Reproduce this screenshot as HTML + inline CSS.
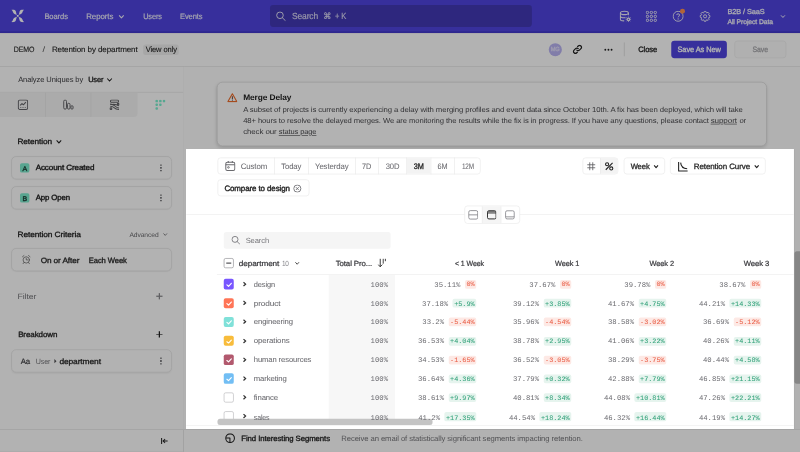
<!DOCTYPE html>
<html><head><meta charset="utf-8"><title>Retention by department</title>
<style>
html,body{margin:0;padding:0;width:800px;height:452px;overflow:hidden;background:#b3b3b3;}
#wrap{position:absolute;left:0;top:0;width:800px;height:452px;overflow:hidden;}
#stage{position:absolute;left:0;top:0;width:1280px;height:723.2px;transform:scale(.625);transform-origin:0 0;overflow:hidden;filter:blur(0.45px);font-family:"Liberation Sans",sans-serif;}
#stage div,#stage svg,#stage span{position:absolute;box-sizing:border-box;}
#stage span{white-space:pre;line-height:1;text-rendering:geometricPrecision;}
#stage span.m{font-family:"Liberation Mono",monospace;}
</style></head>
<body>
<div id="wrap"><div id="stage">
<div style="left:0px;top:0px;width:1280px;height:52.64px;background:#4f44e0;border-bottom:3px solid #4239cc;"></div>
<svg style="left:17.92px;top:14.88px;" width="20.8" height="20.8" viewBox="0 0 24 24"><g fill="#fff"><path d="M0 0.8 C3.2 -0.2 7.2 0.2 8.4 3.4 C9.2 5.8 9.3 8 10.4 10.1 C7 9.8 4.4 8.2 3.3 5.4 C2.6 3.6 2 1.9 0 0.8Z"/><path d="M0 0.8 C3.2 -0.2 7.2 0.2 8.4 3.4 C9.2 5.8 9.3 8 10.4 10.1 C7 9.8 4.4 8.2 3.3 5.4 C2.6 3.6 2 1.9 0 0.8Z" transform="translate(24,0) scale(-1,1)"/><path d="M0 0.8 C3.2 -0.2 7.2 0.2 8.4 3.4 C9.2 5.8 9.3 8 10.4 10.1 C7 9.8 4.4 8.2 3.3 5.4 C2.6 3.6 2 1.9 0 0.8Z" transform="translate(0,24) scale(1,-1)"/><path d="M0 0.8 C3.2 -0.2 7.2 0.2 8.4 3.4 C9.2 5.8 9.3 8 10.4 10.1 C7 9.8 4.4 8.2 3.3 5.4 C2.6 3.6 2 1.9 0 0.8Z" transform="translate(24,24) scale(-1,-1)"/><rect x="10.3" y="10.3" width="3.4" height="3.4" rx=".5"/></g></svg>
<svg style="left:189.31px;top:22.8px;" width="10.56" height="7.2" viewBox="0 0 6.6 4.5"><path d="M1 1 L3.3 3.5 L5.6 1" fill="none" stroke="#f1f0fb" stroke-width="1.05"/></svg>
<div style="left:432px;top:7.84px;width:419.04px;height:34.72px;background:#4239b5;border-radius:5px;"></div>
<svg style="left:441.44px;top:17.92px;" width="16.8" height="15.84" viewBox="0 0 24 24"><circle cx="9.8" cy="9.8" r="8" fill="none" stroke="#e9e8f7" stroke-width="2.3"/><path d="M15.8 15.8 L22.6 22.6" stroke="#e9e8f7" stroke-width="2.3" stroke-linecap="round"/></svg>
<svg style="left:991.04px;top:16px;" width="19.2" height="20.64" viewBox="0 0 24 24"><g fill="none" stroke="#ecebfa" stroke-width="2.1"><ellipse cx="10" cy="5" rx="8" ry="3.4"/><path d="M2 5 V17.4 C2 19.4 5.4 20.8 9.6 20.9 M18 5 V9.4 M2 11.2 C2 13.2 5.6 14.7 10 14.7 C10.8 14.7 11.6 14.6 12.4 14.5"/><circle cx="18.2" cy="17.8" r="2.6" stroke-width="2.6"/><path d="M18.2 12.4V14M18.2 21.6V23.2M12.8 17.8H14.4M22 17.8H23.6M14.4 14 l1.1 1.1M22 21.6 l-1.1-1.1M14.4 21.6 l1.1-1.1M22 14 l-1.1 1.1" stroke-width="1.8"/></g></svg>
<svg style="left:1033.28px;top:16.8px;" width="18.4" height="18.4" viewBox="0 0 24 24"><rect x="1.3" y="1.3" width="5" height="5" rx="2.4" fill="none" stroke="#ecebfa" stroke-width="2"/><rect x="1.3" y="9.5" width="5" height="5" rx="2.4" fill="none" stroke="#ecebfa" stroke-width="2"/><rect x="1.3" y="17.7" width="5" height="5" rx="2.4" fill="none" stroke="#ecebfa" stroke-width="2"/><rect x="9.5" y="1.3" width="5" height="5" rx="2.4" fill="none" stroke="#ecebfa" stroke-width="2"/><rect x="9.5" y="9.5" width="5" height="5" rx="2.4" fill="none" stroke="#ecebfa" stroke-width="2"/><rect x="9.5" y="17.7" width="5" height="5" rx="2.4" fill="none" stroke="#ecebfa" stroke-width="2"/><rect x="17.7" y="1.3" width="5" height="5" rx="2.4" fill="none" stroke="#ecebfa" stroke-width="2"/><rect x="17.7" y="9.5" width="5" height="5" rx="2.4" fill="none" stroke="#ecebfa" stroke-width="2"/><rect x="17.7" y="17.7" width="5" height="5" rx="2.4" fill="none" stroke="#ecebfa" stroke-width="2"/></svg>
<svg style="left:1075.84px;top:16.96px;" width="18.08" height="18.08" viewBox="0 0 24 24"><circle cx="12" cy="12" r="10.6" fill="none" stroke="#ecebfa" stroke-width="2"/><path d="M8.9 9.4 C8.9 5.8 15.1 5.8 15.1 9.4 C15.1 11.8 12 11.7 12 14.3" fill="none" stroke="#ecebfa" stroke-width="2"/><circle cx="12" cy="17.6" r="1.35" fill="#ecebfa"/></svg>
<div style="left:1087.84px;top:14.4px;width:7.68px;height:7.68px;background:#ff9050;border-radius:50%;"></div>
<svg style="left:1119.04px;top:16.64px;" width="18.24" height="18.24" viewBox="0 0 24 24"><g fill="none" stroke="#ecebfa" stroke-width="2" stroke-linejoin="round"><circle cx="12" cy="12" r="3.3"/><path d="M10.34 1.53 L13.66 1.53 L14.41 4.16 L15.84 4.75 L18.23 3.42 L20.58 5.77 L19.25 8.16 L19.84 9.59 L22.47 10.34 L22.47 13.66 L19.84 14.41 L19.25 15.84 L20.58 18.23 L18.23 20.58 L15.84 19.25 L14.41 19.84 L13.66 22.47 L10.34 22.47 L9.59 19.84 L8.16 19.25 L5.77 20.58 L3.42 18.23 L4.75 15.84 L4.16 14.41 L1.53 13.66 L1.53 10.34 L4.16 9.59 L4.75 8.16 L3.42 5.77 L5.77 3.42 L8.16 4.75 L9.59 4.16 Z"/></g></svg>
<svg style="left:1248.08px;top:22.96px;" width="9.44" height="6.56" viewBox="0 0 5.9 4.1"><path d="M1 1 L2.95 3.1 L4.9 1" fill="none" stroke="#f1f0fb" stroke-width="1.0"/></svg>
<div style="left:0px;top:52.64px;width:1280px;height:53.92px;background:#fff;border-bottom:1px solid #e3e3e3;"></div>
<div style="left:229.2px;top:70.88px;width:57.2px;height:16.64px;background:#f0f0f0;border-radius:4px;"></div>
<div style="left:877.6px;top:68.64px;width:21.6px;height:21.6px;background:#b9b3f3;border-radius:50%;"></div>
<svg style="left:916px;top:71.2px;" width="16" height="16" viewBox="0 0 24 24"><g fill="none" stroke="#222" stroke-width="2.9" stroke-linecap="round"><path d="M10.2 13.8 a4.5 4.5 0 0 0 6.4 0 l3.6-3.6 a4.5 4.5 0 0 0-6.4-6.4 l-1.6 1.6"/><path d="M13.8 10.2 a4.5 4.5 0 0 0-6.4 0 l-3.6 3.6 a4.5 4.5 0 0 0 6.4 6.4 l1.6-1.6"/></g></svg>
<div style="left:967.04px;top:77.68px;width:3.04px;height:3.04px;background:#222;border-radius:50%;"></div>
<div style="left:971.81px;top:77.68px;width:3.04px;height:3.04px;background:#222;border-radius:50%;"></div>
<div style="left:976.58px;top:77.68px;width:3.04px;height:3.04px;background:#222;border-radius:50%;"></div>
<div style="left:998.4px;top:68px;width:1.12px;height:22px;background:#e8e8e8;"></div>
<div style="left:1073.6px;top:64.8px;width:89.6px;height:28.4px;background:#4f44e0;border-radius:5px;"></div>
<div style="left:1174.8px;top:64.8px;width:83.2px;height:28.4px;background:#fcfcfc;border:1px solid #ececec;border-radius:5px;"></div>
<div style="left:0px;top:106.56px;width:294.88px;height:616.64px;background:#fff;border-right:1px solid #dedede;"></div>
<svg style="left:170.11px;top:123.92px;" width="10.56" height="7.2" viewBox="0 0 6.6 4.5"><path d="M1 1 L3.3 3.5 L5.6 1" fill="none" stroke="#222" stroke-width="1.05"/></svg>
<div style="left:0px;top:147.36px;width:293.28px;height:0.96px;background:#e3e3e3;"></div>
<div style="left:0px;top:148px;width:219.68px;height:38.56px;background:#f5f5f5;border-bottom-right-radius:6px;"></div>
<div style="left:72.16px;top:148px;width:0.96px;height:38.56px;background:#e6e6e6;"></div>
<div style="left:145.44px;top:148px;width:0.96px;height:38.56px;background:#e6e6e6;"></div>
<svg style="left:27.84px;top:158.56px;" width="17.6" height="17.28" viewBox="0 0 24 24"><g fill="none" stroke="#626266" stroke-width="2.3"><rect x="1.6" y="1.6" width="20.8" height="20.8" rx="3.4"/><path d="M5.6 13.6 L9.8 9.4 L12.8 12 L18.4 6.2" stroke-linejoin="round"/><path d="M7 17.4v2M12 17.4v2M17 17.4v2"/></g></svg>
<svg style="left:100.16px;top:159.2px;" width="18.88" height="16.64" viewBox="0 0 24.4 24"><g fill="none" stroke="#626266" stroke-width="2.2"><rect x="1.4" y="1.4" width="6.4" height="21.2" rx="3.2"/><rect x="10" y="9" width="6" height="13.6" rx="3"/><rect x="18" y="14.6" width="5" height="8" rx="2.5"/></g></svg>
<svg style="left:174.24px;top:158.56px;" width="18.4" height="17.28" viewBox="0 0 24 24"><g fill="none" stroke="#626266" stroke-width="2.3"><rect x="3" y="1.6" width="18" height="5" rx="2.5"/><path d="M2 10.6 C8 10.6 10.5 12 13 14.8 S18.5 19 22 19 M2.5 15.4 C6.5 15.4 9 16.6 11 18.6 S15.5 22.4 22 22.4 M9 10.8 C13 10.6 17 11 22 14.4"/><circle cx="4.2" cy="20.6" r="1.9"/><circle cx="20" cy="10.6" r="1.7"/></g></svg>
<svg style="left:248px;top:159.2px;" width="17.2" height="17.2" viewBox="0 0 24 24"><rect x="1" y="1" width="5.6" height="5.6" rx="2" fill="#7cf0cf"/><rect x="9.2" y="1" width="5.6" height="5.6" rx="2" fill="#7cf0cf"/><rect x="17.4" y="1" width="5.6" height="5.6" rx="2" fill="#7cf0cf"/><rect x="1" y="9.2" width="5.6" height="5.6" rx="2" fill="#7cf0cf"/><rect x="9.2" y="9.2" width="5.6" height="5.6" rx="2" fill="#7cf0cf"/><rect x="1" y="17.4" width="5.6" height="5.6" rx="2" fill="#7cf0cf"/></svg>
<svg style="left:88.51px;top:223.44px;" width="10.56" height="7.2" viewBox="0 0 6.6 4.5"><path d="M1 1 L3.3 3.5 L5.6 1" fill="none" stroke="#222" stroke-width="1.05"/></svg>
<div style="left:18px;top:250px;width:257.04px;height:36.8px;background:#fff;border:1px solid #e0e0e0;border-radius:8px;box-shadow:0 1px 2px rgba(0,0,0,.04);"></div>
<div style="left:32px;top:260.88px;width:14.88px;height:15.04px;background:#7eeccf;border-radius:3px;"></div>
<div style="left:256.24px;top:262.72px;width:2.4px;height:2.4px;background:#6a6a6e;border-radius:50%;"></div>
<div style="left:256.24px;top:267.2px;width:2.4px;height:2.4px;background:#6a6a6e;border-radius:50%;"></div>
<div style="left:256.24px;top:271.68px;width:2.4px;height:2.4px;background:#6a6a6e;border-radius:50%;"></div>
<div style="left:18px;top:298px;width:257.04px;height:36.8px;background:#fff;border:1px solid #e0e0e0;border-radius:8px;box-shadow:0 1px 2px rgba(0,0,0,.04);"></div>
<div style="left:32px;top:308.88px;width:14.88px;height:15.04px;background:#7eeccf;border-radius:3px;"></div>
<div style="left:256.24px;top:310.72px;width:2.4px;height:2.4px;background:#6a6a6e;border-radius:50%;"></div>
<div style="left:256.24px;top:315.2px;width:2.4px;height:2.4px;background:#6a6a6e;border-radius:50%;"></div>
<div style="left:256.24px;top:319.68px;width:2.4px;height:2.4px;background:#6a6a6e;border-radius:50%;"></div>
<svg style="left:259.79px;top:372.16px;" width="8.8" height="6.24" viewBox="0 0 5.5 3.9"><path d="M1 1 L2.75 2.9 L4.5 1" fill="none" stroke="#77777b" stroke-width="0.9"/></svg>
<div style="left:18px;top:397.2px;width:257.04px;height:36.8px;background:#fff;border:1px solid #e0e0e0;border-radius:8px;box-shadow:0 1px 2px rgba(0,0,0,.04);"></div>
<svg style="left:34px;top:406.8px;" width="16" height="16.4" viewBox="0 0 24 24"><g fill="none" stroke="#555" stroke-width="1.6" stroke-linecap="round"><circle cx="12" cy="13" r="7.6"/><path d="M12 8.8V13H15.4M3 5.4 L6.6 2.4M21 5.4 L17.4 2.4M6.4 19.4 L4.4 22M17.6 19.4 L19.6 22"/></g></svg>
<div style="left:249.76px;top:473.2px;width:10.24px;height:1.44px;background:#8a8a8e;"></div>
<div style="left:254.16px;top:468.8px;width:1.44px;height:10.24px;background:#8a8a8e;"></div>
<div style="left:249.76px;top:534.64px;width:10.24px;height:1.44px;background:#222;"></div>
<div style="left:254.16px;top:530.24px;width:1.44px;height:10.24px;background:#222;"></div>
<div style="left:18px;top:558.8px;width:257.04px;height:37.68px;background:#fff;border:1px solid #e0e0e0;border-radius:8px;box-shadow:0 1px 2px rgba(0,0,0,.04);"></div>
<svg style="left:85.92px;top:573.92px;" width="5.12" height="7.68" viewBox="0 0 6 10"><path d="M1 0.6 L5.4 5 L1 9.4Z" fill="#505054"/></svg>
<div style="left:256.24px;top:571.92px;width:2.4px;height:2.4px;background:#6a6a6e;border-radius:50%;"></div>
<div style="left:256.24px;top:576.4px;width:2.4px;height:2.4px;background:#6a6a6e;border-radius:50%;"></div>
<div style="left:256.24px;top:580.88px;width:2.4px;height:2.4px;background:#6a6a6e;border-radius:50%;"></div>
<div style="left:0px;top:686.56px;width:293.28px;height:0.96px;background:#e3e3e3;"></div>
<svg style="left:257.28px;top:699.68px;" width="12.8" height="11.2" viewBox="0 0 17 16"><g fill="none" stroke="#222" stroke-width="2.3"><path d="M1.6 1V15M15.4 8H5.4M9.6 3.4 L5 8 L9.6 12.6"/></g></svg>
<div style="left:294.24px;top:106.56px;width:985.76px;height:616.64px;background:#fefefe;"></div>
<div style="left:346.56px;top:130.88px;width:880.32px;height:103.36px;background:#fff;border:1px solid #d6d6d6;border-radius:9px;box-shadow:0 2px 5px rgba(0,0,0,.13);"></div>
<svg style="left:362.72px;top:147.52px;" width="17.6" height="16.64" viewBox="0 0 24 24"><g fill="none" stroke-linejoin="round" stroke-linecap="round"><path d="M12 3 L22.2 21 H1.8Z" stroke="#ee6c2a" stroke-width="2.6"/><path d="M12 9.6V14.4" stroke="#5e4338" stroke-width="2.3"/></g><circle cx="12" cy="17.6" r="1.3" fill="#5e4338"/></svg>
<div style="left:298.24px;top:238.72px;width:971.84px;height:448.32px;background:#fff;"></div>
<div style="left:348px;top:251.84px;width:421.44px;height:27.2px;border:1px solid #e8e8e8;border-radius:5px;background:#fff;"></div>
<div style="left:438.72px;top:251.84px;width:0.96px;height:27.2px;background:#e8e8e8;"></div>
<div style="left:493.12px;top:251.84px;width:0.96px;height:27.2px;background:#e8e8e8;"></div>
<div style="left:568.32px;top:251.84px;width:0.96px;height:27.2px;background:#e8e8e8;"></div>
<div style="left:605.28px;top:251.84px;width:0.96px;height:27.2px;background:#e8e8e8;"></div>
<div style="left:650.24px;top:251.84px;width:0.96px;height:27.2px;background:#e8e8e8;"></div>
<div style="left:688.64px;top:251.84px;width:0.96px;height:27.2px;background:#e8e8e8;"></div>
<div style="left:726.88px;top:251.84px;width:0.96px;height:27.2px;background:#e8e8e8;"></div>
<div style="left:651.2px;top:252.8px;width:37.44px;height:25.28px;background:#f3f3f3;"></div>
<svg style="left:359.68px;top:256.96px;" width="16.96" height="16.96" viewBox="0 0 24 24"><g fill="none" stroke="#6a6a6e" stroke-width="2.3"><rect x="1.8" y="3.6" width="20.4" height="18.6" rx="3.4"/><path d="M1.8 9.6H22.2M7.4 1V5M16.6 1V5"/><rect x="6" y="13.8" width="3.6" height="3.2" rx="1" stroke-width="2"/></g></svg>
<div style="left:348px;top:286.72px;width:147.2px;height:27.68px;border:1px solid #e8e8e8;border-radius:5px;background:#fff;"></div>
<svg style="left:469.28px;top:294.72px;" width="13.44" height="13.44" viewBox="0 0 24 24"><g fill="none" stroke="#6a6a6e" stroke-width="2.5"><circle cx="12" cy="12" r="10.2"/><path d="M8 8L16 16M16 8L8 16"/></g></svg>
<div style="left:931.84px;top:251.84px;width:57.44px;height:27.2px;border:1px solid #e8e8e8;border-radius:5px;background:#fff;overflow:hidden;"></div>
<div style="left:960.48px;top:252.8px;width:27.84px;height:25.28px;background:#f3f3f3;border-left:1px solid #e8e8e8;"></div>
<svg style="left:937.6px;top:257.6px;" width="16" height="16" viewBox="0 0 24 24"><g fill="none" stroke="#5e5e62" stroke-width="2"><path d="M8.4 2.5V21.5M15.6 2.5V21.5M2.5 8.4H21.5M2.5 15.6H21.5"/></g></svg>
<svg style="left:967.36px;top:257.6px;" width="15.36" height="16.32" viewBox="0 0 24 24"><g fill="none" stroke="#222" stroke-width="2.7"><circle cx="6.8" cy="6.8" r="3.9"/><circle cx="17.2" cy="17.2" r="3.9"/><path d="M20.5 3.5L3.5 20.5"/></g></svg>
<div style="left:997.76px;top:251.84px;width:66.56px;height:27.2px;border:1px solid #e8e8e8;border-radius:5px;background:#fff;"></div>
<svg style="left:1044.69px;top:263.04px;" width="9.44" height="6.72" viewBox="0 0 5.9 4.2"><path d="M1 1 L2.95 3.2 L4.9 1" fill="none" stroke="#222" stroke-width="1.15"/></svg>
<div style="left:1072px;top:251.84px;width:153.44px;height:27.2px;border:1px solid #e8e8e8;border-radius:5px;background:#fff;"></div>
<svg style="left:1083.52px;top:257.92px;" width="17.28" height="17.28" viewBox="0 0 24 24"><g fill="none" stroke="#222" stroke-width="2.4" stroke-linejoin="round"><path d="M2.5 1.5V21.5H22.5"/><path d="M7 3 C7.6 11 11.5 16 21.5 16.6"/></g></svg>
<svg style="left:1205.87px;top:263.04px;" width="9.44" height="6.72" viewBox="0 0 5.9 4.2"><path d="M1 1 L2.95 3.2 L4.9 1" fill="none" stroke="#222" stroke-width="1.15"/></svg>
<div style="left:298.24px;top:342.72px;width:971.84px;height:1.12px;background:#ececec;"></div>
<div style="left:742.72px;top:329.44px;width:89.12px;height:28.48px;border:1px solid #e8e8e8;border-radius:5px;background:#fff;"></div>
<div style="left:771.2px;top:330.4px;width:30.4px;height:26.56px;background:#f5f5f5;border-left:1px solid #ececec;border-right:1px solid #ececec;"></div>
<svg style="left:748.96px;top:336.16px;" width="16.32" height="15.52" viewBox="0 0 20 19"><g fill="none" stroke="#85858a" stroke-width="1.7"><rect x="1.2" y="1.2" width="17.6" height="16.6" rx="3"/><path d="M1.2 9.5H18.8"/></g></svg>
<svg style="left:778.72px;top:336.16px;" width="15.68" height="15.52" viewBox="0 0 20 19"><g fill="none" stroke="#2a2a2a" stroke-width="2.0"><rect x="1.2" y="1.2" width="17.6" height="16.6" rx="3"/><path d="M1.2 5.6H18.8"/><path d="M3 2.4H17" stroke-width="1.2"/></g></svg>
<svg style="left:808px;top:336.16px;" width="15.68" height="15.52" viewBox="0 0 20 19"><g fill="none" stroke="#85858a" stroke-width="1.7"><rect x="1.2" y="1.2" width="17.6" height="16.6" rx="3"/><path d="M1.2 13.6H18.8"/></g></svg>
<div style="left:358.4px;top:371.2px;width:266.4px;height:27.2px;background:#f5f5f5;border-radius:4px;"></div>
<svg style="left:369.6px;top:377.44px;" width="14.72" height="14.72" viewBox="0 0 24 24"><circle cx="9.8" cy="9.8" r="7.8" fill="none" stroke="#6b6b70" stroke-width="2.1"/><path d="M15.6 15.6 L22.4 22.4" stroke="#6b6b70" stroke-width="2.1" stroke-linecap="round"/></svg>
<div style="left:347.2px;top:438.72px;width:922.88px;height:0.96px;background:#ececec;"></div>
<div style="left:358.4px;top:412.96px;width:15.68px;height:15.68px;border:1.5px solid #8a8a8e;border-radius:3px;background:#fff;"></div>
<div style="left:362.24px;top:420px;width:8px;height:1.6px;background:#5a5a5e;"></div>
<svg style="left:471.2px;top:418.4px;" width="8.96" height="6.4" viewBox="0 0 5.6 4.0"><path d="M1 1 L2.8 3.0 L4.6 1" fill="none" stroke="#444" stroke-width="0.95"/></svg>
<svg style="left:604.16px;top:413.44px;" width="17.28" height="15.68" viewBox="0 0 26 23.6"><g fill="none" stroke="#333" stroke-width="2.3"><path d="M6.6 1.5V21M1.6 15.6 L6.6 20.8 L11.6 15.6"/><path d="M13.8 1.5V13.4M19 1.5V7.4" stroke-width="2.2"/></g></svg>
<div style="left:526.4px;top:439.68px;width:105.6px;height:241.92px;background:#f7f7f7;"></div>
<div style="left:358.4px;top:446.4px;width:16px;height:16.32px;background:#7856ff;border-radius:3px;"></div>
<svg style="left:360.8px;top:450.88px;" width="11.2" height="8.96" viewBox="0 0 7 5.6"><path d="M1.3 3 L2.9 4.4 L5.7 1.4" fill="none" stroke="#fff" stroke-width="1.15" stroke-linecap="round" stroke-linejoin="round"/></svg>
<svg style="left:387.84px;top:449.92px;" width="7.04" height="9.28" viewBox="0 0 4.4 5.8"><path d="M1 1 L3.1 2.9 L1 4.8" fill="none" stroke="#333" stroke-width="1.25"/></svg>
<div style="left:743.88px;top:448px;width:17.88px;height:14.08px;background:#fde9e5;border-radius:3px;"></div>
<div style="left:895.88px;top:448px;width:17.88px;height:14.08px;background:#fde9e5;border-radius:3px;"></div>
<div style="left:1047.88px;top:448px;width:17.88px;height:14.08px;background:#fde9e5;border-radius:3px;"></div>
<div style="left:1199.88px;top:448px;width:17.88px;height:14.08px;background:#fde9e5;border-radius:3px;"></div>
<div style="left:358.4px;top:476.61px;width:16px;height:16.32px;background:#ff7557;border-radius:3px;"></div>
<svg style="left:360.8px;top:481.09px;" width="11.2" height="8.96" viewBox="0 0 7 5.6"><path d="M1.3 3 L2.9 4.4 L5.7 1.4" fill="none" stroke="#fff" stroke-width="1.15" stroke-linecap="round" stroke-linejoin="round"/></svg>
<svg style="left:387.84px;top:480.13px;" width="7.04" height="9.28" viewBox="0 0 4.4 5.8"><path d="M1 1 L3.1 2.9 L1 4.8" fill="none" stroke="#333" stroke-width="1.25"/></svg>
<div style="left:724.26px;top:478.21px;width:37.5px;height:14.08px;background:#e6f4ee;border-radius:3px;"></div>
<div style="left:869.72px;top:478.21px;width:44.04px;height:14.08px;background:#e6f4ee;border-radius:3px;"></div>
<div style="left:1021.72px;top:478.21px;width:44.04px;height:14.08px;background:#e6f4ee;border-radius:3px;"></div>
<div style="left:1167.18px;top:478.21px;width:50.58px;height:14.08px;background:#e6f4ee;border-radius:3px;"></div>
<div style="left:358.4px;top:506.82px;width:16px;height:16.32px;background:#80e1d9;border-radius:3px;"></div>
<svg style="left:360.8px;top:511.3px;" width="11.2" height="8.96" viewBox="0 0 7 5.6"><path d="M1.3 3 L2.9 4.4 L5.7 1.4" fill="none" stroke="#fff" stroke-width="1.15" stroke-linecap="round" stroke-linejoin="round"/></svg>
<svg style="left:387.84px;top:510.34px;" width="7.04" height="9.28" viewBox="0 0 4.4 5.8"><path d="M1 1 L3.1 2.9 L1 4.8" fill="none" stroke="#333" stroke-width="1.25"/></svg>
<div style="left:717.72px;top:508.42px;width:44.04px;height:14.08px;background:#fde9e5;border-radius:3px;"></div>
<div style="left:869.72px;top:508.42px;width:44.04px;height:14.08px;background:#fde9e5;border-radius:3px;"></div>
<div style="left:1021.72px;top:508.42px;width:44.04px;height:14.08px;background:#fde9e5;border-radius:3px;"></div>
<div style="left:1173.72px;top:508.42px;width:44.04px;height:14.08px;background:#fde9e5;border-radius:3px;"></div>
<div style="left:358.4px;top:537.02px;width:16px;height:16.32px;background:#f8bc3b;border-radius:3px;"></div>
<svg style="left:360.8px;top:541.5px;" width="11.2" height="8.96" viewBox="0 0 7 5.6"><path d="M1.3 3 L2.9 4.4 L5.7 1.4" fill="none" stroke="#fff" stroke-width="1.15" stroke-linecap="round" stroke-linejoin="round"/></svg>
<svg style="left:387.84px;top:540.54px;" width="7.04" height="9.28" viewBox="0 0 4.4 5.8"><path d="M1 1 L3.1 2.9 L1 4.8" fill="none" stroke="#333" stroke-width="1.25"/></svg>
<div style="left:717.72px;top:538.62px;width:44.04px;height:14.08px;background:#e6f4ee;border-radius:3px;"></div>
<div style="left:869.72px;top:538.62px;width:44.04px;height:14.08px;background:#e6f4ee;border-radius:3px;"></div>
<div style="left:1021.72px;top:538.62px;width:44.04px;height:14.08px;background:#e6f4ee;border-radius:3px;"></div>
<div style="left:1173.72px;top:538.62px;width:44.04px;height:14.08px;background:#e6f4ee;border-radius:3px;"></div>
<div style="left:358.4px;top:567.23px;width:16px;height:16.32px;background:#b2596e;border-radius:3px;"></div>
<svg style="left:360.8px;top:571.71px;" width="11.2" height="8.96" viewBox="0 0 7 5.6"><path d="M1.3 3 L2.9 4.4 L5.7 1.4" fill="none" stroke="#fff" stroke-width="1.15" stroke-linecap="round" stroke-linejoin="round"/></svg>
<svg style="left:387.84px;top:570.75px;" width="7.04" height="9.28" viewBox="0 0 4.4 5.8"><path d="M1 1 L3.1 2.9 L1 4.8" fill="none" stroke="#333" stroke-width="1.25"/></svg>
<div style="left:717.72px;top:568.83px;width:44.04px;height:14.08px;background:#fde9e5;border-radius:3px;"></div>
<div style="left:869.72px;top:568.83px;width:44.04px;height:14.08px;background:#fde9e5;border-radius:3px;"></div>
<div style="left:1021.72px;top:568.83px;width:44.04px;height:14.08px;background:#fde9e5;border-radius:3px;"></div>
<div style="left:1173.72px;top:568.83px;width:44.04px;height:14.08px;background:#e6f4ee;border-radius:3px;"></div>
<div style="left:358.4px;top:597.44px;width:16px;height:16.32px;background:#72bef4;border-radius:3px;"></div>
<svg style="left:360.8px;top:601.92px;" width="11.2" height="8.96" viewBox="0 0 7 5.6"><path d="M1.3 3 L2.9 4.4 L5.7 1.4" fill="none" stroke="#fff" stroke-width="1.15" stroke-linecap="round" stroke-linejoin="round"/></svg>
<svg style="left:387.84px;top:600.96px;" width="7.04" height="9.28" viewBox="0 0 4.4 5.8"><path d="M1 1 L3.1 2.9 L1 4.8" fill="none" stroke="#333" stroke-width="1.25"/></svg>
<div style="left:717.72px;top:599.04px;width:44.04px;height:14.08px;background:#e6f4ee;border-radius:3px;"></div>
<div style="left:869.72px;top:599.04px;width:44.04px;height:14.08px;background:#e6f4ee;border-radius:3px;"></div>
<div style="left:1021.72px;top:599.04px;width:44.04px;height:14.08px;background:#e6f4ee;border-radius:3px;"></div>
<div style="left:1167.18px;top:599.04px;width:50.58px;height:14.08px;background:#e6f4ee;border-radius:3px;"></div>
<div style="left:358.4px;top:627.65px;width:16px;height:16.32px;border:1.5px solid #b5b5b9;border-radius:3px;background:#fff;"></div>
<svg style="left:387.84px;top:631.17px;" width="7.04" height="9.28" viewBox="0 0 4.4 5.8"><path d="M1 1 L3.1 2.9 L1 4.8" fill="none" stroke="#333" stroke-width="1.25"/></svg>
<div style="left:717.72px;top:629.25px;width:44.04px;height:14.08px;background:#e6f4ee;border-radius:3px;"></div>
<div style="left:869.72px;top:629.25px;width:44.04px;height:14.08px;background:#e6f4ee;border-radius:3px;"></div>
<div style="left:1015.18px;top:629.25px;width:50.58px;height:14.08px;background:#e6f4ee;border-radius:3px;"></div>
<div style="left:1167.18px;top:629.25px;width:50.58px;height:14.08px;background:#e6f4ee;border-radius:3px;"></div>
<div style="left:358.4px;top:657.86px;width:16px;height:16.32px;border:1.5px solid #b5b5b9;border-radius:3px;background:#fff;"></div>
<svg style="left:387.84px;top:661.38px;" width="7.04" height="9.28" viewBox="0 0 4.4 5.8"><path d="M1 1 L3.1 2.9 L1 4.8" fill="none" stroke="#333" stroke-width="1.25"/></svg>
<div style="left:711.18px;top:659.46px;width:50.58px;height:14.08px;background:#e6f4ee;border-radius:3px;"></div>
<div style="left:863.18px;top:659.46px;width:50.58px;height:14.08px;background:#e6f4ee;border-radius:3px;"></div>
<div style="left:1015.18px;top:659.46px;width:50.58px;height:14.08px;background:#e6f4ee;border-radius:3px;"></div>
<div style="left:1167.18px;top:659.46px;width:50.58px;height:14.08px;background:#e6f4ee;border-radius:3px;"></div>
<div style="left:298.24px;top:680.32px;width:971.84px;height:6.72px;background:#fff;border-top:1px solid #ededed;"></div>
<div style="left:347.84px;top:670.4px;width:344.32px;height:9.6px;background:#c4c4c4;border-radius:4px;"></div>
<div style="left:294.24px;top:687.04px;width:985.76px;height:36.16px;background:#fff;border-top:1px solid #e3e3e3;"></div>
<div style="left:293.28px;top:687.04px;width:0.96px;height:36.16px;background:#dedede;"></div>
<svg style="left:359.84px;top:693.44px;" width="16.32" height="16.32" viewBox="0 0 24 24"><g fill="none" stroke="#222" stroke-width="2.5"><circle cx="12" cy="12" r="10.2"/><path d="M2.4 11.4 H11.6 V21.6" stroke-linejoin="round"/></g></svg>
<div style="left:1270.08px;top:238.72px;width:0.96px;height:448.32px;background:#ededed;"></div>
<div style="left:1271.36px;top:401.6px;width:11.84px;height:212.8px;background:#c1c1c1;border-radius:4px;"></div>
<span style="left:71.2px;top:17.08px;font-size:12.75px;line-height:17.00px;font-weight:400;-webkit-text-stroke:0.20px #f1f0fb;color:#f1f0fb;letter-spacing:-0.153px;transform:scaleX(0.9523);transform-origin:left center;">Boards</span>
<span style="left:138px;top:17.08px;font-size:12.75px;line-height:17.00px;font-weight:400;-webkit-text-stroke:0.20px #f1f0fb;color:#f1f0fb;letter-spacing:-0.153px;transform:scaleX(0.9913);transform-origin:left center;">Reports</span>
<span style="left:229.2px;top:17.08px;font-size:12.75px;line-height:17.00px;font-weight:400;-webkit-text-stroke:0.20px #f1f0fb;color:#f1f0fb;letter-spacing:-0.153px;transform:scaleX(0.9222);transform-origin:left center;">Users</span>
<span style="left:288px;top:17.08px;font-size:12.75px;line-height:17.00px;font-weight:400;-webkit-text-stroke:0.20px #f1f0fb;color:#f1f0fb;letter-spacing:-0.153px;transform:scaleX(0.9458);transform-origin:left center;">Events</span>
<span style="left:466.8px;top:17.18px;font-size:14.25px;line-height:19.00px;font-weight:400;-webkit-text-stroke:0.25px #dcdaf3;color:#dcdaf3;letter-spacing:-0.171px;transform:scaleX(0.9518);transform-origin:left center;">Search</span>
<span style="left:517.2px;top:16.08px;font-size:14px;line-height:18.00px;font-weight:400;-webkit-text-stroke:0.30px #dcdaf3;color:#dcdaf3;letter-spacing:-0.168px;transform:scaleX(0.9246);transform-origin:left center;">⌘</span>
<span style="left:536px;top:17.18px;font-size:14.25px;line-height:19.00px;font-weight:400;-webkit-text-stroke:0.25px #dcdaf3;color:#dcdaf3;letter-spacing:-0.171px;transform:scaleX(0.8458);transform-origin:left center;">+ K</span>
<span style="left:1164px;top:12.18px;font-size:11.5px;line-height:15.00px;font-weight:400;-webkit-text-stroke:0.50px #f1f0fb;color:#f1f0fb;letter-spacing:-0.138px;transform:scaleX(1.0193);transform-origin:left center;">B2B / SaaS</span>
<span style="left:1164px;top:27.56px;font-size:10.5px;line-height:14.00px;font-weight:400;-webkit-text-stroke:0.50px #f1f0fb;color:#f1f0fb;letter-spacing:-0.126px;transform:scaleX(1.0347);transform-origin:left center;">All Project Data</span>
<span style="left:21.6px;top:71.20px;font-size:12.5px;line-height:16.00px;font-weight:400;-webkit-text-stroke:0.17px #1f1f1f;color:#1f1f1f;letter-spacing:-0.150px;transform:scaleX(0.8996);transform-origin:left center;">DEMO</span>
<span style="left:68px;top:71.20px;font-size:12.5px;line-height:16.00px;font-weight:400;color:#555;letter-spacing:-0.150px;transform:scaleX(1.2019);transform-origin:left center;">/</span>
<span style="left:83.2px;top:71.20px;font-size:12.5px;line-height:16.00px;font-weight:400;-webkit-text-stroke:0.17px #1f1f1f;color:#1f1f1f;letter-spacing:-0.150px;transform:scaleX(1.0281);transform-origin:left center;">Retention by department</span>
<span style="left:233.2px;top:71.20px;font-size:12.5px;line-height:16.00px;font-weight:400;-webkit-text-stroke:0.17px #1f1f1f;color:#1f1f1f;letter-spacing:-0.150px;transform:scaleX(0.9630);transform-origin:left center;">View only</span>
<span style="left:881.28px;top:74.02px;font-size:9.5px;line-height:12.00px;font-weight:400;-webkit-text-stroke:0.50px #e4e1fa;color:#e4e1fa;letter-spacing:-0.114px;transform:scaleX(0.9550);transform-origin:left center;">MG</span>
<span style="left:1020.8px;top:71.20px;font-size:12.5px;line-height:16.00px;font-weight:400;-webkit-text-stroke:0.50px #1f1f1f;color:#1f1f1f;letter-spacing:-0.150px;transform:scaleX(0.9738);transform-origin:left center;">Close</span>
<span style="left:1084px;top:71.20px;font-size:12.5px;line-height:16.00px;font-weight:400;-webkit-text-stroke:0.50px #fff;color:#fff;letter-spacing:-0.150px;transform:scaleX(0.9518);transform-origin:left center;">Save As New</span>
<span style="left:1204px;top:71.20px;font-size:12.5px;line-height:16.00px;font-weight:400;-webkit-text-stroke:0.50px #a9a9ad;color:#a9a9ad;letter-spacing:-0.150px;transform:scaleX(0.8887);transform-origin:left center;">Save</span>
<span style="left:29.2px;top:119.20px;font-size:12px;line-height:16.00px;font-weight:400;color:#3c3c40;letter-spacing:-0.144px;transform:scaleX(1.0051);transform-origin:left center;">Analyze Uniques by</span>
<span style="left:140.8px;top:119.20px;font-size:12px;line-height:16.00px;font-weight:400;-webkit-text-stroke:0.50px #1f1f1f;color:#1f1f1f;letter-spacing:-0.144px;transform:scaleX(0.9852);transform-origin:left center;">User</span>
<span style="left:28px;top:218.40px;font-size:12.25px;line-height:16.00px;font-weight:400;-webkit-text-stroke:0.50px #1f1f1f;color:#1f1f1f;letter-spacing:-0.147px;transform:scaleX(1.0797);transform-origin:left center;">Retention</span>
<span style="left:36.16px;top:262.52px;font-size:10.5px;line-height:14.00px;font-weight:400;-webkit-text-stroke:0.55px #1f3d36;color:#1f3d36;letter-spacing:-0.126px;transform:scaleX(1.0681);transform-origin:left center;">A</span>
<span style="left:56.96px;top:260.40px;font-size:12.25px;line-height:16.00px;font-weight:400;-webkit-text-stroke:0.60px #222;color:#222;letter-spacing:-0.147px;transform:scaleX(1.0538);transform-origin:left center;">Account Created</span>
<span style="left:36.16px;top:310.52px;font-size:10.5px;line-height:14.00px;font-weight:400;-webkit-text-stroke:0.55px #1f3d36;color:#1f3d36;letter-spacing:-0.126px;transform:scaleX(1.0681);transform-origin:left center;">B</span>
<span style="left:56.96px;top:308.40px;font-size:12.25px;line-height:16.00px;font-weight:400;-webkit-text-stroke:0.60px #222;color:#222;letter-spacing:-0.147px;transform:scaleX(1.0193);transform-origin:left center;">App Open</span>
<span style="left:28px;top:366.80px;font-size:12.25px;line-height:16.00px;font-weight:400;-webkit-text-stroke:0.50px #1f1f1f;color:#1f1f1f;letter-spacing:-0.147px;transform:scaleX(1.0918);transform-origin:left center;">Retention Criteria</span>
<span style="left:207.2px;top:368.60px;font-size:10.5px;line-height:14.00px;font-weight:400;color:#6a6a6e;letter-spacing:-0.126px;transform:scaleX(1.0240);transform-origin:left center;">Advanced</span>
<span style="left:64.8px;top:408.00px;font-size:12.25px;line-height:16.00px;font-weight:400;-webkit-text-stroke:0.50px #2a2a2a;color:#2a2a2a;letter-spacing:-0.147px;transform:scaleX(1.0759);transform-origin:left center;">On or After</span>
<span style="left:142px;top:408.00px;font-size:12.25px;line-height:16.00px;font-weight:400;-webkit-text-stroke:0.50px #2a2a2a;color:#2a2a2a;letter-spacing:-0.147px;transform:scaleX(0.9952);transform-origin:left center;">Each Week</span>
<span style="left:28px;top:466.00px;font-size:12.25px;line-height:16.00px;font-weight:400;color:#77777b;letter-spacing:-0.147px;transform:scaleX(1.1388);transform-origin:left center;">Filter</span>
<span style="left:28.64px;top:526.88px;font-size:12.25px;line-height:16.00px;font-weight:400;-webkit-text-stroke:0.50px #1f1f1f;color:#1f1f1f;letter-spacing:-0.147px;transform:scaleX(1.0459);transform-origin:left center;">Breakdown</span>
<span style="left:32.64px;top:569.60px;font-size:12.5px;line-height:16.00px;font-weight:400;-webkit-text-stroke:0.25px #3a3a3e;color:#3a3a3e;letter-spacing:-0.150px;transform:scaleX(1.0027);transform-origin:left center;">Aa</span>
<span style="left:56.8px;top:569.60px;font-size:12.25px;line-height:16.00px;font-weight:400;color:#77777b;letter-spacing:-0.147px;transform:scaleX(0.9303);transform-origin:left center;">User</span>
<span style="left:94.88px;top:569.60px;font-size:12.25px;line-height:16.00px;font-weight:400;-webkit-text-stroke:0.50px #2a2a2a;color:#2a2a2a;letter-spacing:-0.147px;transform:scaleX(1.0975);transform-origin:left center;">department</span>
<span style="left:388.96px;top:146.84px;font-size:13px;line-height:17.00px;font-weight:700;color:#1f1f1f;letter-spacing:-0.156px;transform:scaleX(1.0289);transform-origin:left center;">Merge Delay</span>
<span style="left:388.8px;top:168.82px;font-size:11.5px;line-height:15.00px;font-weight:400;color:#4a4a4e;letter-spacing:-0.138px;transform:scaleX(1.0767);transform-origin:left center;">A subset of projects is currently experiencing a delay with merging profiles and event data since October 10th. A fix has been deployed, which will take</span>
<span style="left:388.8px;top:186.74px;font-size:11.5px;line-height:15.00px;font-weight:400;color:#4a4a4e;letter-spacing:-0.138px;transform:scaleX(1.0679);transform-origin:left center;">48+ hours to resolve the delayed merges. We are monitoring the results while the fix is in progress. If you have any questions, please contact </span>
<span style="left:1137.2px;top:186.74px;font-size:11.5px;line-height:15.00px;font-weight:400;color:#4a4a4e;letter-spacing:-0.138px;transform:scaleX(1.1228);transform-origin:left center;text-decoration:underline;">support</span>
<span style="left:1183.36px;top:186.74px;font-size:11.5px;line-height:15.00px;font-weight:400;color:#4a4a4e;letter-spacing:-0.138px;transform:scaleX(1.0690);transform-origin:left center;">or</span>
<span style="left:388.8px;top:204.98px;font-size:11.5px;line-height:15.00px;font-weight:400;color:#4a4a4e;letter-spacing:-0.138px;transform:scaleX(1.1020);transform-origin:left center;">check our </span>
<span style="left:445.76px;top:204.98px;font-size:11.5px;line-height:15.00px;font-weight:400;color:#4a4a4e;letter-spacing:-0.138px;transform:scaleX(1.0395);transform-origin:left center;text-decoration:underline;">status page</span>
<span style="left:385.2px;top:256.60px;font-size:12.75px;line-height:17.00px;font-weight:400;-webkit-text-stroke:0.10px #6b6b70;color:#6b6b70;letter-spacing:-0.153px;transform:scaleX(0.9857);transform-origin:left center;">Custom</span>
<span style="left:450.4px;top:256.60px;font-size:12.75px;line-height:17.00px;font-weight:400;-webkit-text-stroke:0.10px #6b6b70;color:#6b6b70;letter-spacing:-0.153px;transform:scaleX(0.9620);transform-origin:left center;">Today</span>
<span style="left:504.4px;top:256.60px;font-size:12.75px;line-height:17.00px;font-weight:400;-webkit-text-stroke:0.10px #6b6b70;color:#6b6b70;letter-spacing:-0.153px;transform:scaleX(0.9770);transform-origin:left center;">Yesterday</span>
<span style="left:579.2px;top:256.60px;font-size:12.75px;line-height:17.00px;font-weight:400;-webkit-text-stroke:0.10px #6b6b70;color:#6b6b70;letter-spacing:-0.153px;transform:scaleX(0.9250);transform-origin:left center;">7D</span>
<span style="left:616.8px;top:256.60px;font-size:12.75px;line-height:17.00px;font-weight:400;-webkit-text-stroke:0.10px #6b6b70;color:#6b6b70;letter-spacing:-0.153px;transform:scaleX(0.9591);transform-origin:left center;">30D</span>
<span style="left:662px;top:256.60px;font-size:12.75px;line-height:17.00px;font-weight:400;-webkit-text-stroke:0.50px #222;color:#222;letter-spacing:-0.153px;transform:scaleX(0.9192);transform-origin:left center;">3M</span>
<span style="left:700px;top:256.60px;font-size:12.75px;line-height:17.00px;font-weight:400;-webkit-text-stroke:0.10px #6b6b70;color:#6b6b70;letter-spacing:-0.153px;transform:scaleX(0.9192);transform-origin:left center;">6M</span>
<span style="left:739.2px;top:256.60px;font-size:12.75px;line-height:17.00px;font-weight:400;-webkit-text-stroke:0.10px #6b6b70;color:#6b6b70;letter-spacing:-0.153px;transform:scaleX(0.8051);transform-origin:left center;">12M</span>
<span style="left:359.2px;top:292.80px;font-size:12.5px;line-height:16.00px;font-weight:400;-webkit-text-stroke:0.60px #262626;color:#262626;letter-spacing:-0.150px;transform:scaleX(1.0167);transform-origin:left center;">Compare to design</span>
<span style="left:1008.8px;top:257.60px;font-size:12.5px;line-height:16.00px;font-weight:400;-webkit-text-stroke:0.50px #2c2c2c;color:#2c2c2c;letter-spacing:-0.150px;transform:scaleX(0.9762);transform-origin:left center;">Week</span>
<span style="left:1110px;top:257.60px;font-size:12.5px;line-height:16.00px;font-weight:400;-webkit-text-stroke:0.50px #2c2c2c;color:#2c2c2c;letter-spacing:-0.150px;transform:scaleX(1.0218);transform-origin:left center;">Retention Curve</span>
<span style="left:392.8px;top:376.80px;font-size:12px;line-height:16.00px;font-weight:400;color:#77777b;letter-spacing:-0.144px;transform:scaleX(1.0115);transform-origin:left center;">Search</span>
<span style="left:381.6px;top:413.12px;font-size:12px;line-height:16.00px;font-weight:400;-webkit-text-stroke:0.35px #3a3a3e;color:#3a3a3e;letter-spacing:-0.144px;transform:scaleX(1.0934);transform-origin:left center;">department</span>
<span style="left:451.2px;top:413.12px;font-size:12px;line-height:16.00px;font-weight:400;color:#85858a;letter-spacing:-0.144px;transform:scaleX(0.8574);transform-origin:left center;">10</span>
<span style="left:536.8px;top:413.12px;font-size:12px;line-height:16.00px;font-weight:400;-webkit-text-stroke:0.35px #3a3a3e;color:#3a3a3e;letter-spacing:-0.144px;transform:scaleX(1.0496);transform-origin:left center;">Total Pro...</span>
<span style="left:728px;top:413.12px;font-size:12px;line-height:16.00px;font-weight:400;-webkit-text-stroke:0.35px #3a3a3e;color:#3a3a3e;letter-spacing:-0.144px;transform:scaleX(0.9344);transform-origin:left center;">&lt; 1 Week</span>
<span style="left:888px;top:413.12px;font-size:12px;line-height:16.00px;font-weight:400;-webkit-text-stroke:0.35px #3a3a3e;color:#3a3a3e;letter-spacing:-0.144px;transform:scaleX(0.9775);transform-origin:left center;">Week 1</span>
<span style="left:1039.04px;top:413.12px;font-size:12px;line-height:16.00px;font-weight:400;-webkit-text-stroke:0.35px #3a3a3e;color:#3a3a3e;letter-spacing:-0.144px;transform:scaleX(0.9937);transform-origin:left center;">Week 2</span>
<span style="left:1189.76px;top:413.12px;font-size:12px;line-height:16.00px;font-weight:400;-webkit-text-stroke:0.35px #3a3a3e;color:#3a3a3e;letter-spacing:-0.144px;transform:scaleX(1.0260);transform-origin:left center;">Week 3</span>
<span style="left:405.6px;top:446.72px;font-size:12px;line-height:16.00px;font-weight:400;-webkit-text-stroke:0.10px #6b6b70;color:#6b6b70;letter-spacing:-0.144px;transform:scaleX(0.9855);transform-origin:left center;">design</span>
<span class="m" style="left:592.96px;top:448.74px;font-size:11.6px;line-height:15.00px;font-weight:400;color:#6b6b70;">100%</span>
<span class="m" style="left:746.28px;top:448.91px;font-size:10.9px;line-height:14.00px;font-weight:400;-webkit-text-stroke:0.07px #ea5f48;color:#ea5f48;">0%</span>
<span class="m" style="left:694.92px;top:448.74px;font-size:11.6px;line-height:15.00px;font-weight:400;color:#6b6b70;">35.11%</span>
<span class="m" style="left:898.28px;top:448.91px;font-size:10.9px;line-height:14.00px;font-weight:400;-webkit-text-stroke:0.07px #ea5f48;color:#ea5f48;">0%</span>
<span class="m" style="left:846.92px;top:448.74px;font-size:11.6px;line-height:15.00px;font-weight:400;color:#6b6b70;">37.67%</span>
<span class="m" style="left:1050.28px;top:448.91px;font-size:10.9px;line-height:14.00px;font-weight:400;-webkit-text-stroke:0.07px #ea5f48;color:#ea5f48;">0%</span>
<span class="m" style="left:998.92px;top:448.74px;font-size:11.6px;line-height:15.00px;font-weight:400;color:#6b6b70;">39.78%</span>
<span class="m" style="left:1202.28px;top:448.91px;font-size:10.9px;line-height:14.00px;font-weight:400;-webkit-text-stroke:0.07px #ea5f48;color:#ea5f48;">0%</span>
<span class="m" style="left:1150.92px;top:448.74px;font-size:11.6px;line-height:15.00px;font-weight:400;color:#6b6b70;">38.67%</span>
<span style="left:405.6px;top:476.93px;font-size:12px;line-height:16.00px;font-weight:400;-webkit-text-stroke:0.10px #6b6b70;color:#6b6b70;letter-spacing:-0.144px;transform:scaleX(1.0966);transform-origin:left center;">product</span>
<span class="m" style="left:592.96px;top:478.92px;font-size:11.6px;line-height:15.00px;font-weight:400;color:#6b6b70;">100%</span>
<span class="m" style="left:726.66px;top:479.92px;font-size:10.9px;line-height:14.00px;font-weight:400;-webkit-text-stroke:0.07px #33a27a;color:#33a27a;">+5.9%</span>
<span class="m" style="left:675.3px;top:478.92px;font-size:11.6px;line-height:15.00px;font-weight:400;color:#6b6b70;">37.18%</span>
<span class="m" style="left:872.12px;top:479.92px;font-size:10.9px;line-height:14.00px;font-weight:400;-webkit-text-stroke:0.07px #33a27a;color:#33a27a;">+3.85%</span>
<span class="m" style="left:820.76px;top:478.92px;font-size:11.6px;line-height:15.00px;font-weight:400;color:#6b6b70;">39.12%</span>
<span class="m" style="left:1024.12px;top:479.92px;font-size:10.9px;line-height:14.00px;font-weight:400;-webkit-text-stroke:0.07px #33a27a;color:#33a27a;">+4.75%</span>
<span class="m" style="left:972.76px;top:478.92px;font-size:11.6px;line-height:15.00px;font-weight:400;color:#6b6b70;">41.67%</span>
<span class="m" style="left:1169.58px;top:479.92px;font-size:10.9px;line-height:14.00px;font-weight:400;-webkit-text-stroke:0.07px #33a27a;color:#33a27a;">+14.33%</span>
<span class="m" style="left:1118.22px;top:478.92px;font-size:11.6px;line-height:15.00px;font-weight:400;color:#6b6b70;">44.21%</span>
<span style="left:405.6px;top:507.14px;font-size:12px;line-height:16.00px;font-weight:400;-webkit-text-stroke:0.10px #6b6b70;color:#6b6b70;letter-spacing:-0.144px;transform:scaleX(1.0271);transform-origin:left center;">engineering</span>
<span class="m" style="left:592.96px;top:508.33px;font-size:11.6px;line-height:15.00px;font-weight:400;color:#6b6b70;">100%</span>
<span class="m" style="left:720.12px;top:509.33px;font-size:10.9px;line-height:14.00px;font-weight:400;-webkit-text-stroke:0.07px #ea5f48;color:#ea5f48;">-5.44%</span>
<span class="m" style="left:675.72px;top:508.33px;font-size:11.6px;line-height:15.00px;font-weight:400;color:#6b6b70;">33.2%</span>
<span class="m" style="left:872.12px;top:509.33px;font-size:10.9px;line-height:14.00px;font-weight:400;-webkit-text-stroke:0.07px #ea5f48;color:#ea5f48;">-4.54%</span>
<span class="m" style="left:820.76px;top:508.33px;font-size:11.6px;line-height:15.00px;font-weight:400;color:#6b6b70;">35.96%</span>
<span class="m" style="left:1024.12px;top:509.33px;font-size:10.9px;line-height:14.00px;font-weight:400;-webkit-text-stroke:0.07px #ea5f48;color:#ea5f48;">-3.02%</span>
<span class="m" style="left:972.76px;top:508.33px;font-size:11.6px;line-height:15.00px;font-weight:400;color:#6b6b70;">38.58%</span>
<span class="m" style="left:1176.12px;top:509.33px;font-size:10.9px;line-height:14.00px;font-weight:400;-webkit-text-stroke:0.07px #ea5f48;color:#ea5f48;">-5.12%</span>
<span class="m" style="left:1124.76px;top:508.33px;font-size:11.6px;line-height:15.00px;font-weight:400;color:#6b6b70;">36.69%</span>
<span style="left:405.6px;top:537.34px;font-size:12px;line-height:16.00px;font-weight:400;-webkit-text-stroke:0.10px #6b6b70;color:#6b6b70;letter-spacing:-0.144px;transform:scaleX(1.0474);transform-origin:left center;">operations</span>
<span class="m" style="left:592.96px;top:538.54px;font-size:11.6px;line-height:15.00px;font-weight:400;color:#6b6b70;">100%</span>
<span class="m" style="left:720.12px;top:539.54px;font-size:10.9px;line-height:14.00px;font-weight:400;-webkit-text-stroke:0.07px #33a27a;color:#33a27a;">+4.04%</span>
<span class="m" style="left:668.76px;top:538.54px;font-size:11.6px;line-height:15.00px;font-weight:400;color:#6b6b70;">36.53%</span>
<span class="m" style="left:872.12px;top:539.54px;font-size:10.9px;line-height:14.00px;font-weight:400;-webkit-text-stroke:0.07px #33a27a;color:#33a27a;">+2.95%</span>
<span class="m" style="left:820.76px;top:538.54px;font-size:11.6px;line-height:15.00px;font-weight:400;color:#6b6b70;">38.78%</span>
<span class="m" style="left:1024.12px;top:539.54px;font-size:10.9px;line-height:14.00px;font-weight:400;-webkit-text-stroke:0.07px #33a27a;color:#33a27a;">+3.22%</span>
<span class="m" style="left:972.76px;top:538.54px;font-size:11.6px;line-height:15.00px;font-weight:400;color:#6b6b70;">41.06%</span>
<span class="m" style="left:1176.12px;top:539.54px;font-size:10.9px;line-height:14.00px;font-weight:400;-webkit-text-stroke:0.07px #33a27a;color:#33a27a;">+4.11%</span>
<span class="m" style="left:1124.76px;top:538.54px;font-size:11.6px;line-height:15.00px;font-weight:400;color:#6b6b70;">40.26%</span>
<span style="left:405.6px;top:566.75px;font-size:12px;line-height:16.00px;font-weight:400;-webkit-text-stroke:0.10px #6b6b70;color:#6b6b70;letter-spacing:-0.144px;transform:scaleX(1.0159);transform-origin:left center;">human resources</span>
<span class="m" style="left:592.96px;top:568.74px;font-size:11.6px;line-height:15.00px;font-weight:400;color:#6b6b70;">100%</span>
<span class="m" style="left:720.12px;top:569.74px;font-size:10.9px;line-height:14.00px;font-weight:400;-webkit-text-stroke:0.07px #ea5f48;color:#ea5f48;">-1.65%</span>
<span class="m" style="left:668.76px;top:568.74px;font-size:11.6px;line-height:15.00px;font-weight:400;color:#6b6b70;">34.53%</span>
<span class="m" style="left:872.12px;top:569.74px;font-size:10.9px;line-height:14.00px;font-weight:400;-webkit-text-stroke:0.07px #ea5f48;color:#ea5f48;">-3.05%</span>
<span class="m" style="left:820.76px;top:568.74px;font-size:11.6px;line-height:15.00px;font-weight:400;color:#6b6b70;">36.52%</span>
<span class="m" style="left:1024.12px;top:569.74px;font-size:10.9px;line-height:14.00px;font-weight:400;-webkit-text-stroke:0.07px #ea5f48;color:#ea5f48;">-3.75%</span>
<span class="m" style="left:972.76px;top:568.74px;font-size:11.6px;line-height:15.00px;font-weight:400;color:#6b6b70;">38.29%</span>
<span class="m" style="left:1176.12px;top:569.74px;font-size:10.9px;line-height:14.00px;font-weight:400;-webkit-text-stroke:0.07px #33a27a;color:#33a27a;">+4.58%</span>
<span class="m" style="left:1124.76px;top:568.74px;font-size:11.6px;line-height:15.00px;font-weight:400;color:#6b6b70;">40.44%</span>
<span style="left:405.6px;top:597.76px;font-size:12px;line-height:16.00px;font-weight:400;-webkit-text-stroke:0.10px #6b6b70;color:#6b6b70;letter-spacing:-0.144px;transform:scaleX(1.0271);transform-origin:left center;">marketing</span>
<span class="m" style="left:592.96px;top:598.95px;font-size:11.6px;line-height:15.00px;font-weight:400;color:#6b6b70;">100%</span>
<span class="m" style="left:720.12px;top:599.95px;font-size:10.9px;line-height:14.00px;font-weight:400;-webkit-text-stroke:0.07px #33a27a;color:#33a27a;">+4.36%</span>
<span class="m" style="left:668.76px;top:598.95px;font-size:11.6px;line-height:15.00px;font-weight:400;color:#6b6b70;">36.64%</span>
<span class="m" style="left:872.12px;top:599.95px;font-size:10.9px;line-height:14.00px;font-weight:400;-webkit-text-stroke:0.07px #33a27a;color:#33a27a;">+0.32%</span>
<span class="m" style="left:820.76px;top:598.95px;font-size:11.6px;line-height:15.00px;font-weight:400;color:#6b6b70;">37.79%</span>
<span class="m" style="left:1024.12px;top:599.95px;font-size:10.9px;line-height:14.00px;font-weight:400;-webkit-text-stroke:0.07px #33a27a;color:#33a27a;">+7.79%</span>
<span class="m" style="left:972.76px;top:598.95px;font-size:11.6px;line-height:15.00px;font-weight:400;color:#6b6b70;">42.88%</span>
<span class="m" style="left:1169.58px;top:599.95px;font-size:10.9px;line-height:14.00px;font-weight:400;-webkit-text-stroke:0.07px #33a27a;color:#33a27a;">+21.15%</span>
<span class="m" style="left:1118.22px;top:598.95px;font-size:11.6px;line-height:15.00px;font-weight:400;color:#6b6b70;">46.85%</span>
<span style="left:405.6px;top:627.97px;font-size:12px;line-height:16.00px;font-weight:400;-webkit-text-stroke:0.10px #6b6b70;color:#6b6b70;letter-spacing:-0.144px;transform:scaleX(1.0295);transform-origin:left center;">finance</span>
<span class="m" style="left:592.96px;top:630.44px;font-size:11.6px;line-height:15.00px;font-weight:400;color:#6b6b70;">100%</span>
<span class="m" style="left:720.12px;top:631.44px;font-size:10.9px;line-height:14.00px;font-weight:400;-webkit-text-stroke:0.07px #33a27a;color:#33a27a;">+9.97%</span>
<span class="m" style="left:668.76px;top:630.44px;font-size:11.6px;line-height:15.00px;font-weight:400;color:#6b6b70;">38.61%</span>
<span class="m" style="left:872.12px;top:631.44px;font-size:10.9px;line-height:14.00px;font-weight:400;-webkit-text-stroke:0.07px #33a27a;color:#33a27a;">+8.34%</span>
<span class="m" style="left:820.76px;top:630.44px;font-size:11.6px;line-height:15.00px;font-weight:400;color:#6b6b70;">40.81%</span>
<span class="m" style="left:1017.58px;top:631.44px;font-size:10.9px;line-height:14.00px;font-weight:400;-webkit-text-stroke:0.07px #33a27a;color:#33a27a;">+10.81%</span>
<span class="m" style="left:966.22px;top:630.44px;font-size:11.6px;line-height:15.00px;font-weight:400;color:#6b6b70;">44.08%</span>
<span class="m" style="left:1169.58px;top:631.44px;font-size:10.9px;line-height:14.00px;font-weight:400;-webkit-text-stroke:0.07px #33a27a;color:#33a27a;">+22.21%</span>
<span class="m" style="left:1118.22px;top:630.44px;font-size:11.6px;line-height:15.00px;font-weight:400;color:#6b6b70;">47.26%</span>
<span style="left:405.6px;top:659.78px;font-size:12px;line-height:16.00px;font-weight:400;-webkit-text-stroke:0.10px #6b6b70;color:#6b6b70;letter-spacing:-0.144px;transform:scaleX(0.9232);transform-origin:left center;">sales</span>
<span class="m" style="left:592.96px;top:661.97px;font-size:11.6px;line-height:15.00px;font-weight:400;color:#6b6b70;">100%</span>
<span class="m" style="left:713.58px;top:662.97px;font-size:10.9px;line-height:14.00px;font-weight:400;-webkit-text-stroke:0.07px #33a27a;color:#33a27a;">+17.35%</span>
<span class="m" style="left:669.18px;top:661.97px;font-size:11.6px;line-height:15.00px;font-weight:400;color:#6b6b70;">41.2%</span>
<span class="m" style="left:865.58px;top:662.97px;font-size:10.9px;line-height:14.00px;font-weight:400;-webkit-text-stroke:0.07px #33a27a;color:#33a27a;">+18.24%</span>
<span class="m" style="left:814.22px;top:661.97px;font-size:11.6px;line-height:15.00px;font-weight:400;color:#6b6b70;">44.54%</span>
<span class="m" style="left:1017.58px;top:662.97px;font-size:10.9px;line-height:14.00px;font-weight:400;-webkit-text-stroke:0.07px #33a27a;color:#33a27a;">+16.44%</span>
<span class="m" style="left:966.22px;top:661.97px;font-size:11.6px;line-height:15.00px;font-weight:400;color:#6b6b70;">46.32%</span>
<span class="m" style="left:1169.58px;top:662.97px;font-size:10.9px;line-height:14.00px;font-weight:400;-webkit-text-stroke:0.07px #33a27a;color:#33a27a;">+14.27%</span>
<span class="m" style="left:1118.22px;top:661.97px;font-size:11.6px;line-height:15.00px;font-weight:400;color:#6b6b70;">44.19%</span>
<span style="left:385.6px;top:693.28px;font-size:12.25px;line-height:16.00px;font-weight:400;-webkit-text-stroke:0.50px #1f1f1f;color:#1f1f1f;letter-spacing:-0.147px;transform:scaleX(1.0192);transform-origin:left center;">Find Interesting Segments</span>
<span style="left:546.4px;top:693.28px;font-size:12.25px;line-height:16.00px;font-weight:400;color:#77777b;letter-spacing:-0.147px;transform:scaleX(1.0065);transform-origin:left center;">Receive an email of statistically significant segments impacting retention.</span>
<div style="left:298.24px;top:238.72px;width:971.84px;height:448.32px;box-shadow:0 0 0 2000px rgba(0,0,0,.3);"></div>
</div></div>
</body></html>
